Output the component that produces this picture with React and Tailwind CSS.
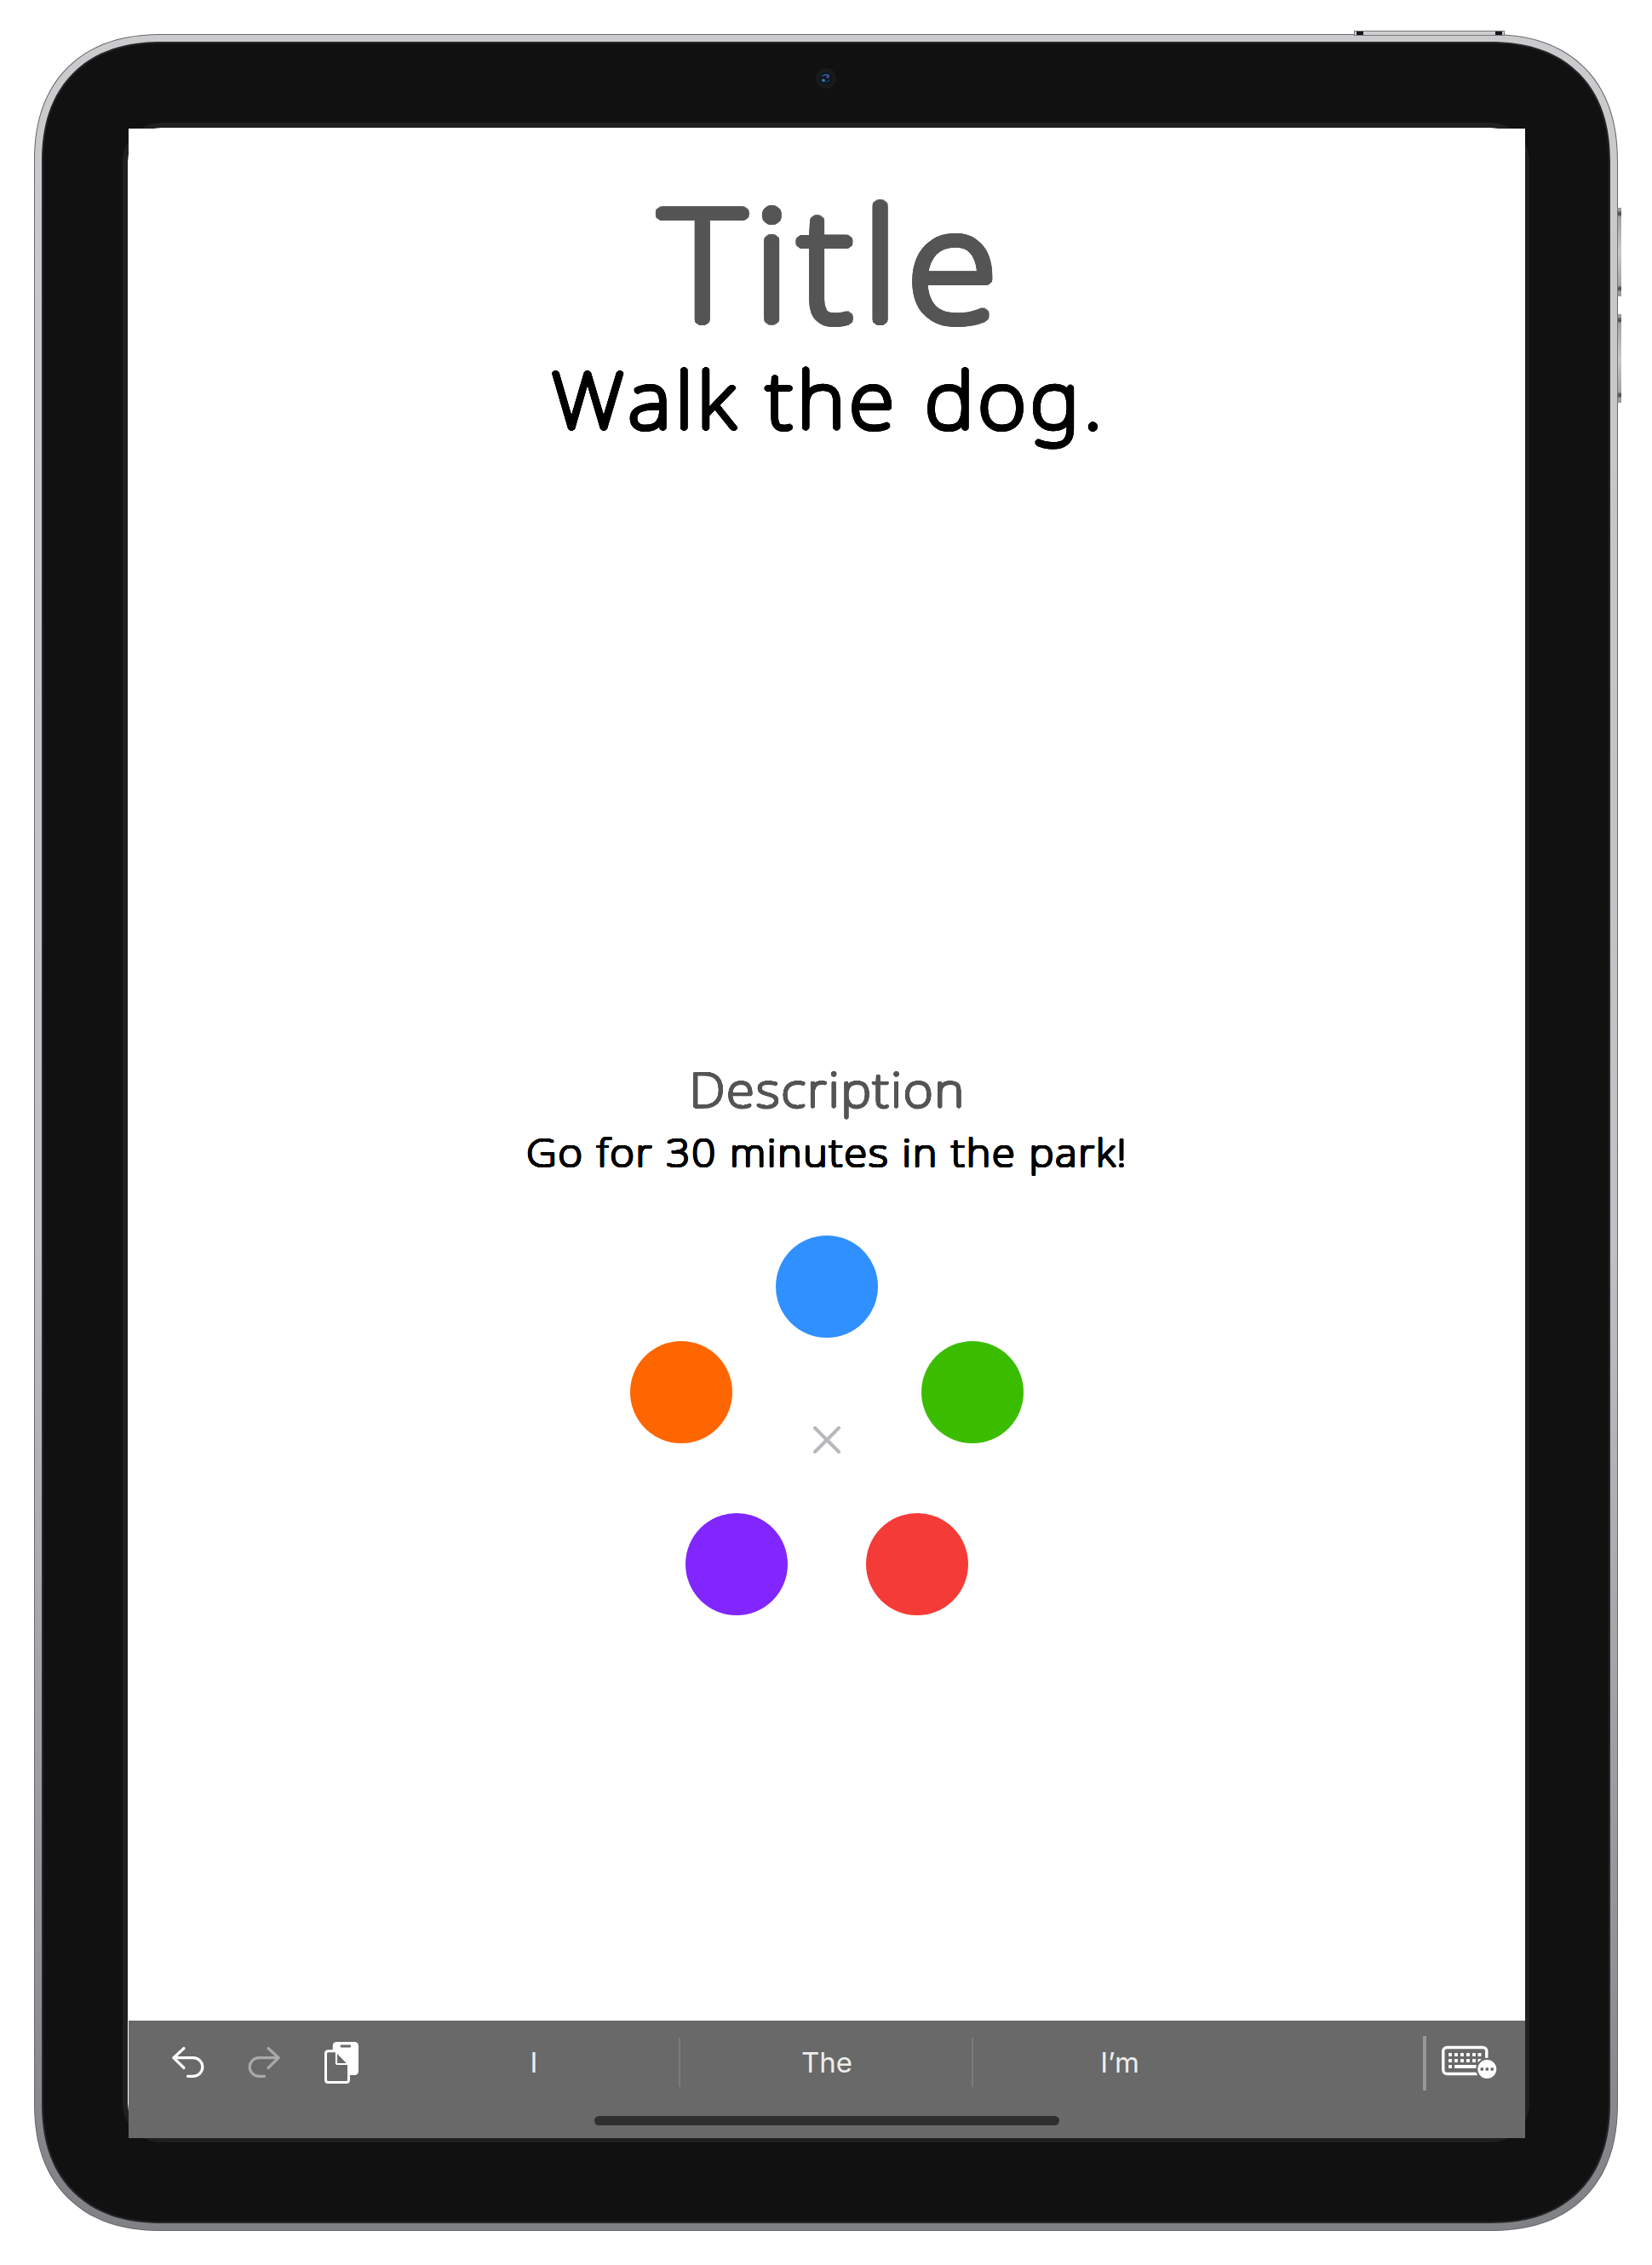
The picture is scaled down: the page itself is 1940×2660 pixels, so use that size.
const ROUND_PEN =
  "[font-family:'Noto_Sans',sans-serif] font-thin text-center whitespace-nowrap scale-x-[1.08]";

// Rounds the ends of thin letter strokes by stacking copies around a circle.
function penShadow(radius, color) {
  const rings = [];
  for (const r of [radius, radius * 0.55]) {
    for (let i = 0; i < 24; i++) {
      const a = (i / 24) * Math.PI * 2;
      rings.push(`${(Math.cos(a) * r).toFixed(2)}px ${(Math.sin(a) * r).toFixed(2)}px 0 ${color}`);
    }
  }
  return rings.join(", ");
}

function RoundedText({ children, className, pen, color }) {
  return (
    <div className={`${ROUND_PEN} ${className}`} style={{ color, textShadow: penShadow(pen, color) }}>
      {children}
    </div>
  );
}

function UndoIcon({ className }) {
  return (
    <svg className={className} width="40" height="40" viewBox="0 0 40 40" fill="none" stroke="currentColor" strokeWidth="3.200" strokeLinecap="round" strokeLinejoin="round">
      <path d="M16 5.500 3.800 16.700 16 28.500M4.500 16.700H27a10.800 10.800 0 0 1 0 21.600H20.500" />
    </svg>
  );
}

function PasteIcon() {
  return (
    <svg width="42" height="51" viewBox="0 0 42 51">
      <rect x="10.700" y="1" width="30.300" height="39" rx="4.500" fill="#fff" />
      <rect x="19.700" y="4.600" width="12.300" height="2.800" rx="1" fill="#696969" />
      <path d="M5.500 11.800H15L29.500 26.800V45.500Q29.500 48.500 26.500 48.500H5.500Q2.500 48.500 2.500 45.500V14.800Q2.500 11.800 5.500 11.800Z" fill="#696969" stroke="#fff" strokeWidth="3" />
      <path d="M15 12V25.500Q15 27 16.500 27H30" fill="none" stroke="#fff" strokeWidth="2.200" />
    </svg>
  );
}

function KeyboardIcon() {
  const cols = [8, 15, 22, 29, 36, 42.5];
  return (
    <svg width="66" height="40" viewBox="0 0 66 40">
      <rect x="1.800" y="2.500" width="51" height="31" rx="4.500" fill="none" stroke="#fff" strokeWidth="3.400" />
      {cols.map((x) => <rect key={x} x={x} y="9" width="4" height="4" rx="0.800" fill="#fff" />)}
      {cols.map((x) => <rect key={x} x={x} y="16" width="4" height="4" rx="0.800" fill="#fff" />)}
      <rect x="8" y="23" width="4" height="4" rx="0.800" fill="#fff" />
      <rect x="15" y="23" width="26" height="4" rx="0.800" fill="#fff" />
      <circle cx="53.300" cy="28" r="13.200" fill="#696969" />
      <circle cx="53.300" cy="28" r="11" fill="#fff" />
      {[47.3, 53.3, 59.3].map((x) => <circle key={x} cx={x} cy="28" r="1.900" fill="#696969" />)}
    </svg>
  );
}

function Suggestion({ children }) {
  return <div className="flex w-[342px] justify-center pl-[2px]">{children}</div>;
}

function Toolbar() {
  return (
    <div className="flex h-[138px] flex-col bg-[#696969]">
      <div className="flex h-[112px] items-start">
        <div className="flex w-[304px] items-start pl-[49px] text-white">
          <UndoIcon className="mt-[27px]" />
          <UndoIcon className="mt-[27px] ml-[51px] -scale-x-100 text-[#a9a9a9]" />
          <div className="mt-[24px] ml-[49px]"><PasteIcon /></div>
        </div>
        <div className="mt-5 flex h-[58px] items-center font-[Inter,sans-serif] text-[33px] leading-none text-[#ededed]">
          <Suggestion>I</Suggestion>
          <div className="h-full w-[2px] bg-[#7b7b7b]" />
          <Suggestion>The</Suggestion>
          <div className="h-full w-[2px] bg-[#7b7b7b]" />
          <Suggestion>I’m</Suggestion>
        </div>
        <div className="mt-[18px] ml-[186px] h-16 w-1 bg-[#979797]" />
        <div className="mt-[29px] ml-[18px]"><KeyboardIcon /></div>
      </div>
      <div className="ml-[547px] h-[11px] w-[546px] rounded-full bg-[#2f2f2f]" />
    </div>
  );
}

function Dot({ className }) {
  return <div className={`size-[120px] rounded-full ${className}`} />;
}

function ColorPicker() {
  return (
    <div className="mx-auto flex w-[462px] flex-col items-center">
      <Dot className="bg-[#3190ff]" />
      <div className="mt-1 flex h-[120px] w-full justify-between">
        <Dot className="bg-[#ff6600]" />
        <svg className="mt-[100px]" width="32" height="32" viewBox="0 0 32 32" stroke="#b7b8be" strokeWidth="4" strokeLinecap="round">
          <path d="M2 2 30 30M30 2 2 30" />
        </svg>
        <Dot className="bg-[#3abd00]" />
      </div>
      <div className="mt-[82px] flex w-[332px] justify-between">
        <Dot className="bg-[#8126ff]" />
        <Dot className="bg-[#f53b37]" />
      </div>
    </div>
  );
}

function SideButton({ className }) {
  return (
    <div className={`absolute left-[1899px] h-[104px] w-[5px] border-l border-[#77777b] bg-linear-to-b from-[#9a9a9e] via-[#c9c9c9] to-[#9a9a9e] ${className}`}>
      <div className="mt-1 h-[7px] bg-linear-to-b from-[#77777b] via-[#4b4b50] to-[#aaa]" />
      <div className="mt-[80px] h-[7px] bg-linear-to-b from-[#aaa] via-[#4b4b50] to-[#77777b]" />
    </div>
  );
}

function Camera() {
  return (
    <div className="absolute top-[80px] left-[958px] flex size-6 items-center justify-center rounded-full bg-[#191a1c]">
      <svg width="14" height="14" viewBox="0 0 14 14">
        <circle cx="7" cy="7" r="7" fill="#0b1522" />
        <path d="M1.500 5.500A6 6 0 0 1 12.500 5Q8 2.500 1.500 5.500Z" fill="#1f547c" />
        <path d="M2 9Q7 13 12.500 7.500A6 6 0 0 1 2 9Z" fill="#1c4a78" />
        <circle cx="9" cy="5.300" r="1.700" fill="#70409a" />
        <circle cx="4" cy="9.300" r="1.900" fill="#357f9c" />
      </svg>
    </div>
  );
}

export default function App() {
  return (
    <div className="relative h-[2660px] w-[1940px] overflow-hidden bg-white p-10">
      <div className="absolute top-[36px] left-[1590px] flex h-[6px] w-[177px] justify-between border border-[#77777b] bg-[#cfcfcf] px-[2px]">
        <div className="w-2 bg-[#151517]" />
        <div className="w-2 bg-[#151517]" />
      </div>
      <SideButton className="top-[244px]" />
      <SideButton className="top-[369px]" />
      <div className="h-[2580px] w-[1860px] rounded-[150px] bg-[#68686c] p-px [corner-shape:superellipse(1.2)]">
        <div className="h-full rounded-[149px] bg-linear-to-b from-[#cbcbce] via-[#c0c1c4] via-55% to-[#808184] p-2 [corner-shape:superellipse(1.2)]">
          <div className="h-full rounded-[141px] border-2 border-[#242526] bg-[#111111] px-[93px] pt-[93px] [corner-shape:superellipse(1.2)]">
            <div className="h-[2372px] w-[1652px] rounded-[46px] bg-[#202020] p-[6px]">
              <div className="h-[2360px] w-[1640px] rounded-[40px] bg-white pt-px pl-px">
                <div className="flex h-[2360px] w-[1640px] flex-col bg-white">
                  <div className="flex h-[2222px] flex-col">
                    <RoundedText className="mt-[34px] h-[222px] pl-[16px] text-[179px] leading-[243px] tracking-[11.800px]" pen={6} color="#555555">Title</RoundedText>
                    <RoundedText className="h-[122px] pl-[5px] text-[90px] leading-[122px] tracking-[5.200px] [font-kerning:none]" pen={2.8} color="#000000">Walk the dog.</RoundedText>
                    <RoundedText className="mt-[713px] h-[74px] pl-[2px] text-[55px] leading-[74px] tracking-[2.300px]" pen={1.5} color="#555555">Description</RoundedText>
                    <RoundedText className="mt-[6px] h-[62px] pl-[1px] text-[45px] leading-[62px] tracking-[2.150px]" pen={1.3} color="#000000">Go for 30 minutes in the park!</RoundedText>
                    <div className="mt-[67px]"><ColorPicker /></div>
                  </div>
                  <Toolbar />
                </div>
              </div>
            </div>
          </div>
        </div>
      </div>
      <Camera />
    </div>
  );
}
